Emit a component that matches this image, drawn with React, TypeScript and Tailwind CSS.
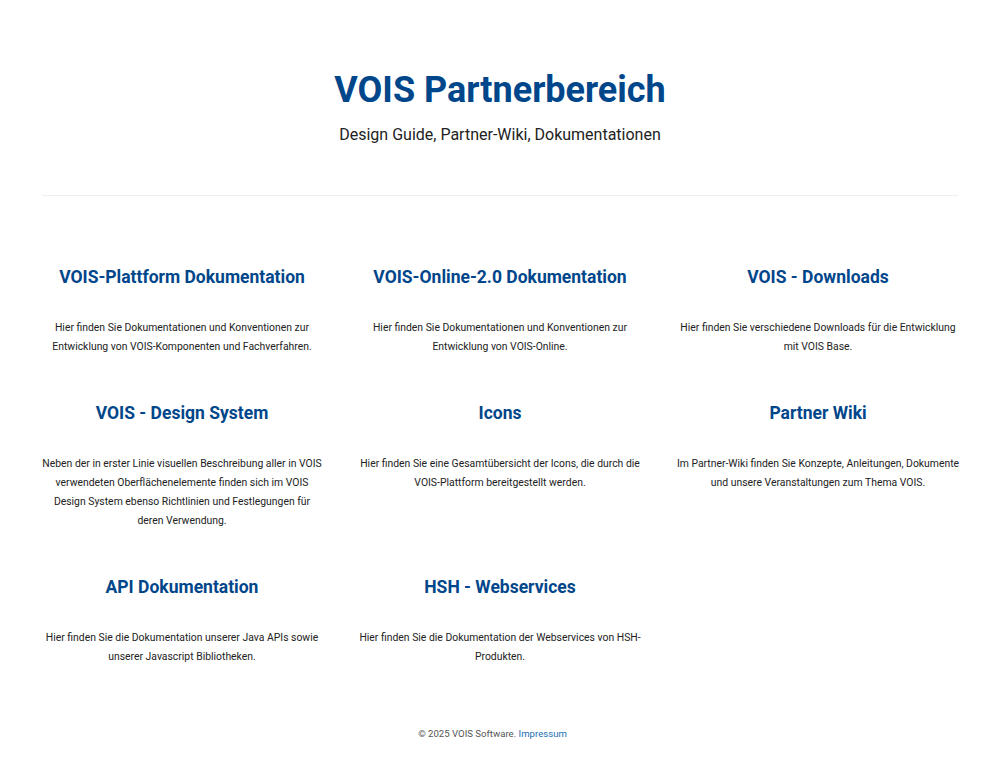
import React from "react";

type Item = {
  title: string;
  text: string;
};

const items: Item[] = [
  {
    title: "VOIS-Plattform Dokumentation",
    text: "Hier finden Sie Dokumentationen und Konventionen zur Entwicklung von VOIS-Komponenten und Fachverfahren.",
  },
  {
    title: "VOIS-Online-2.0 Dokumentation",
    text: "Hier finden Sie Dokumentationen und Konventionen zur Entwicklung von VOIS-Online.",
  },
  {
    title: "VOIS - Downloads",
    text: "Hier finden Sie verschiedene Downloads für die Entwicklung mit VOIS Base.",
  },
  {
    title: "VOIS - Design System",
    text: "Neben der in erster Linie visuellen Beschreibung aller in VOIS verwendeten Oberflächenelemente finden sich im VOIS Design System ebenso Richtlinien und Festlegungen für deren Verwendung.",
  },
  {
    title: "Icons",
    text: "Hier finden Sie eine Gesamtübersicht der Icons, die durch die VOIS-Plattform bereitgestellt werden.",
  },
  {
    title: "Partner Wiki",
    text: "Im Partner-Wiki finden Sie Konzepte, Anleitungen, Dokumente und unsere Veranstaltungen zum Thema VOIS.",
  },
  {
    title: "API Dokumentation",
    text: "Hier finden Sie die Dokumentation unserer Java APIs sowie unserer Javascript Bibliotheken.",
  },
  {
    title: "HSH - Webservices",
    text: "Hier finden Sie die Dokumentation der Webservices von HSH-Produkten.",
  },
];

const Card = ({title, text}: Item) => (
  <div className="px-[17.5px] pb-[45px] text-center">
    <h2 className="text-[17.5px] leading-[24px] font-bold text-[#00468b]">{title}</h2>
    <p className="mt-[29px] text-[10.4px] leading-[19px] text-[#222]">{text}</p>
  </div>
);

export default function App() {
  return (
    <div className="min-h-[759px] bg-white font-['Roboto',sans-serif]">
      <header className="pt-[68px] text-center">
        <h1 className="text-[36px] leading-[44px] font-bold text-[#00468b]">VOIS Partnerbereich</h1>
        <p className="mt-[11px] text-[16px] leading-[24px] text-[#222]">
          Design Guide, Partner-Wiki, Dokumentationen
        </p>
      </header>

      <hr className="mx-[42px] mt-[48px] border-t border-[#eeeeee]" />

      <main className="mx-auto mt-[69px] w-[954px]">
        <div className="grid grid-cols-3">
          {items.map((item) => (
            <Card key={item.title} {...item} />
          ))}
        </div>
      </main>

      <footer className="pt-[15px] pr-[15px] pb-[16px] text-center text-[9.6px] leading-[16px] text-[#555]">
        © 2025 VOIS Software. <a className="text-[#1a6fb0]">Impressum</a>
      </footer>
    </div>
  );
}
